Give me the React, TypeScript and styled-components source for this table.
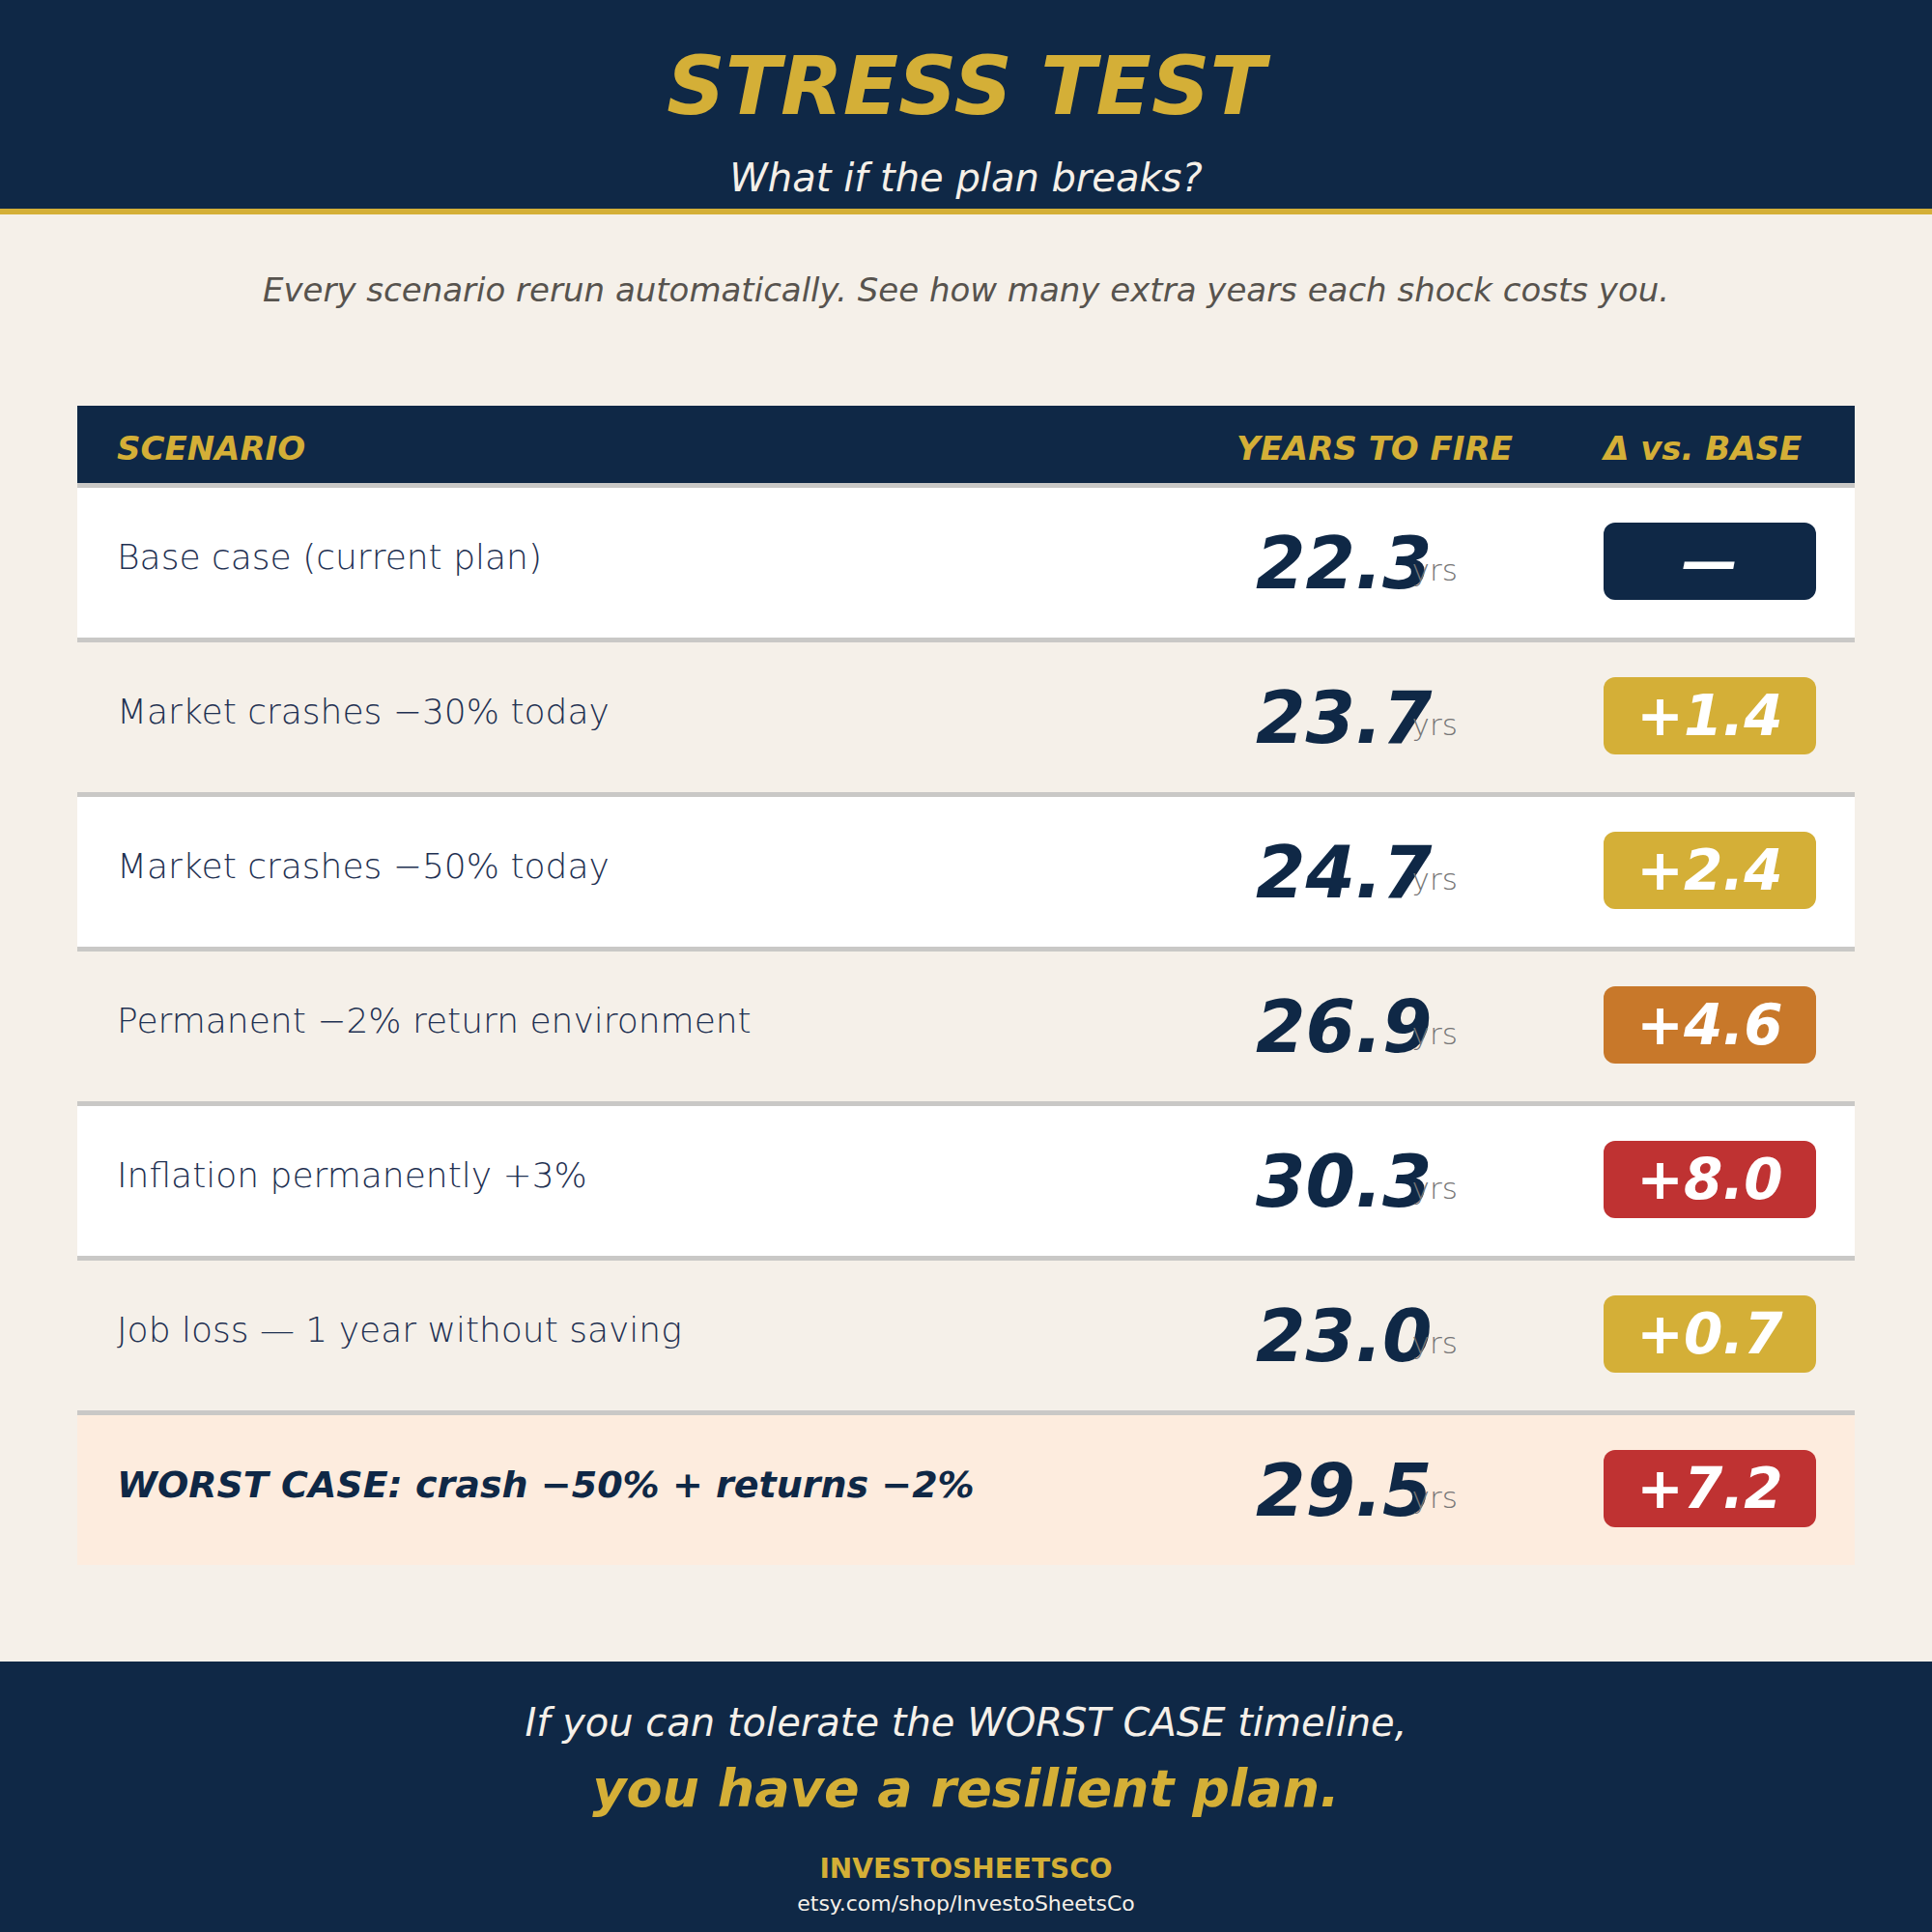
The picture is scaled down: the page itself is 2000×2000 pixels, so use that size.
import styled, { createGlobalStyle } from "styled-components";

const GlobalStyle = createGlobalStyle`
  html, body {
    margin: 0;
    padding: 0;
    background: #f5f0e9;
  }
  * {
    box-sizing: border-box;
  }
`;

const NAVY = "#0f2846";
const GOLD = "#d4af37";

const Page = styled.div`
  width: 2000px;
  height: 2000px;
  display: flex;
  flex-direction: column;
  background: #f5f0e9;
  font-family: "DejaVu Sans", "Liberation Sans", sans-serif;
  overflow: hidden;
`;

const Header = styled.header`
  height: 222px;
  background: ${NAVY};
  border-bottom: 6px solid ${GOLD};
  padding-top: 47px;
  display: flex;
  flex-direction: column;
  align-items: center;
`;

const Title = styled.h1`
  margin: 0;
  font-size: 84px;
  line-height: 84px;
  font-weight: 700;
  font-style: italic;
  color: ${GOLD};
`;

const Subtitle = styled.p`
  margin: 33px 0 0;
  font-size: 40px;
  line-height: 40px;
  font-style: italic;
  color: #f5f0e9;
`;

const Tagline = styled.p`
  margin: 61px 0 0;
  text-align: center;
  font-size: 34px;
  line-height: 34px;
  font-style: italic;
  color: #57534e;
`;

const Table = styled.section`
  margin: 103px 80px 0;
  display: flex;
  flex-direction: column;
`;

const Grid = styled.div`
  display: grid;
  grid-template-columns: 1200px 380px 260px;
  align-items: center;
`;

const HeadRow = styled(Grid)`
  height: 80px;
  padding-top: 8px;
  background: ${NAVY};
`;

const HeadCell = styled.div<{ $first?: boolean }>`
  padding-left: ${(p) => (p.$first ? "41px" : "0")};
  font-size: 34px;
  font-weight: 700;
  font-style: italic;
  color: ${GOLD};
  white-space: nowrap;
`;

const Row = styled(Grid)<{ $bg: string }>`
  height: 160px;
  border-top: 5px solid #c9c8c6;
  background: ${(p) => p.$bg};
`;

const Scenario = styled.div<{ $strong?: boolean }>`
  padding: 0 0 12px 41px;
  font-size: ${(p) => (p.$strong ? "38px" : "36px")};
  font-weight: ${(p) => (p.$strong ? 700 : 200)};
  font-style: ${(p) => (p.$strong ? "italic" : "normal")};
  color: ${(p) => (p.$strong ? NAVY : "#1f3152")};
  white-space: nowrap;
`;

const Years = styled.div`
  padding-left: 20px;
  white-space: nowrap;
`;

const YearsValue = styled.span`
  font-size: 74px;
  font-weight: 700;
  font-style: italic;
  color: ${NAVY};
`;

/* the unit tucks under the slanted last digit, as in the design */
const YearsUnit = styled.span`
  margin-left: -21px;
  font-size: 31px;
  font-weight: 200;
  color: #767676;
  vertical-align: 8px;
`;

const Badge = styled.div<{ $color: string }>`
  width: 220px;
  height: 80px;
  margin-bottom: 3px;
  border-radius: 12px;
  background: ${(p) => p.$color};
  display: flex;
  align-items: center;
  justify-content: center;
  font-size: 58px;
  font-weight: 700;
  font-style: italic;
  color: #ffffff;
`;

const Footer = styled.footer`
  margin-top: auto;
  height: 280px;
  background: ${NAVY};
  padding-top: 43px;
  display: flex;
  flex-direction: column;
  align-items: center;
`;

const FooterLine = styled.p`
  margin: 0;
  font-size: 40px;
  line-height: 40px;
  font-style: italic;
  color: #f5f0e9;
`;

const FooterPunch = styled.p`
  margin: 22px 0 0;
  font-size: 54px;
  line-height: 54px;
  font-weight: 700;
  font-style: italic;
  color: ${GOLD};
`;

const Brand = styled.p`
  margin: 42px 0 0;
  font-size: 28px;
  line-height: 28px;
  font-weight: 700;
  color: ${GOLD};
`;

const ShopUrl = styled.p`
  margin: 11px 0 0;
  font-size: 22px;
  line-height: 22px;
  color: #f5f0e9;
`;

interface IScenario {
  label: string;
  years: string;
  delta: string;
  color: string;
  bg: string;
  strong?: boolean;
}

const scenarios: IScenario[] = [
  { label: "Base case (current plan)", years: "22.3", delta: "—", color: NAVY, bg: "#ffffff" },
  { label: "Market crashes −30% today", years: "23.7", delta: "+1.4", color: GOLD, bg: "#f5f0e9" },
  { label: "Market crashes −50% today", years: "24.7", delta: "+2.4", color: GOLD, bg: "#ffffff" },
  { label: "Permanent −2% return environment", years: "26.9", delta: "+4.6", color: "#c8782a", bg: "#f5f0e9" },
  { label: "Inflation permanently +3%", years: "30.3", delta: "+8.0", color: "#bf3232", bg: "#ffffff" },
  { label: "Job loss — 1 year without saving", years: "23.0", delta: "+0.7", color: GOLD, bg: "#f5f0e9" },
  {
    label: "WORST CASE: crash −50% + returns −2%",
    years: "29.5",
    delta: "+7.2",
    color: "#bf3232",
    bg: "#fdecde",
    strong: true,
  },
];

function App() {
  return (
    <>
      <GlobalStyle />
      <Page>
        <Header>
          <Title>STRESS TEST</Title>
          <Subtitle>What if the plan breaks?</Subtitle>
        </Header>
        <Tagline>
          Every scenario rerun automatically. See how many extra years each shock costs you.
        </Tagline>
        <Table>
          <HeadRow>
            <HeadCell $first>SCENARIO</HeadCell>
            <HeadCell>YEARS TO FIRE</HeadCell>
            <HeadCell>Δ vs. BASE</HeadCell>
          </HeadRow>
          {scenarios.map((s) => (
            <Row key={s.label} $bg={s.bg}>
              <Scenario $strong={s.strong}>{s.label}</Scenario>
              <Years>
                <YearsValue>{s.years}</YearsValue>
                <YearsUnit>yrs</YearsUnit>
              </Years>
              <Badge $color={s.color}>{s.delta}</Badge>
            </Row>
          ))}
        </Table>
        <Footer>
          <FooterLine>If you can tolerate the WORST CASE timeline,</FooterLine>
          <FooterPunch>you have a resilient plan.</FooterPunch>
          <Brand>INVESTOSHEETSCO</Brand>
          <ShopUrl>etsy.com/shop/InvestoSheetsCo</ShopUrl>
        </Footer>
      </Page>
    </>
  );
}

export default App;
